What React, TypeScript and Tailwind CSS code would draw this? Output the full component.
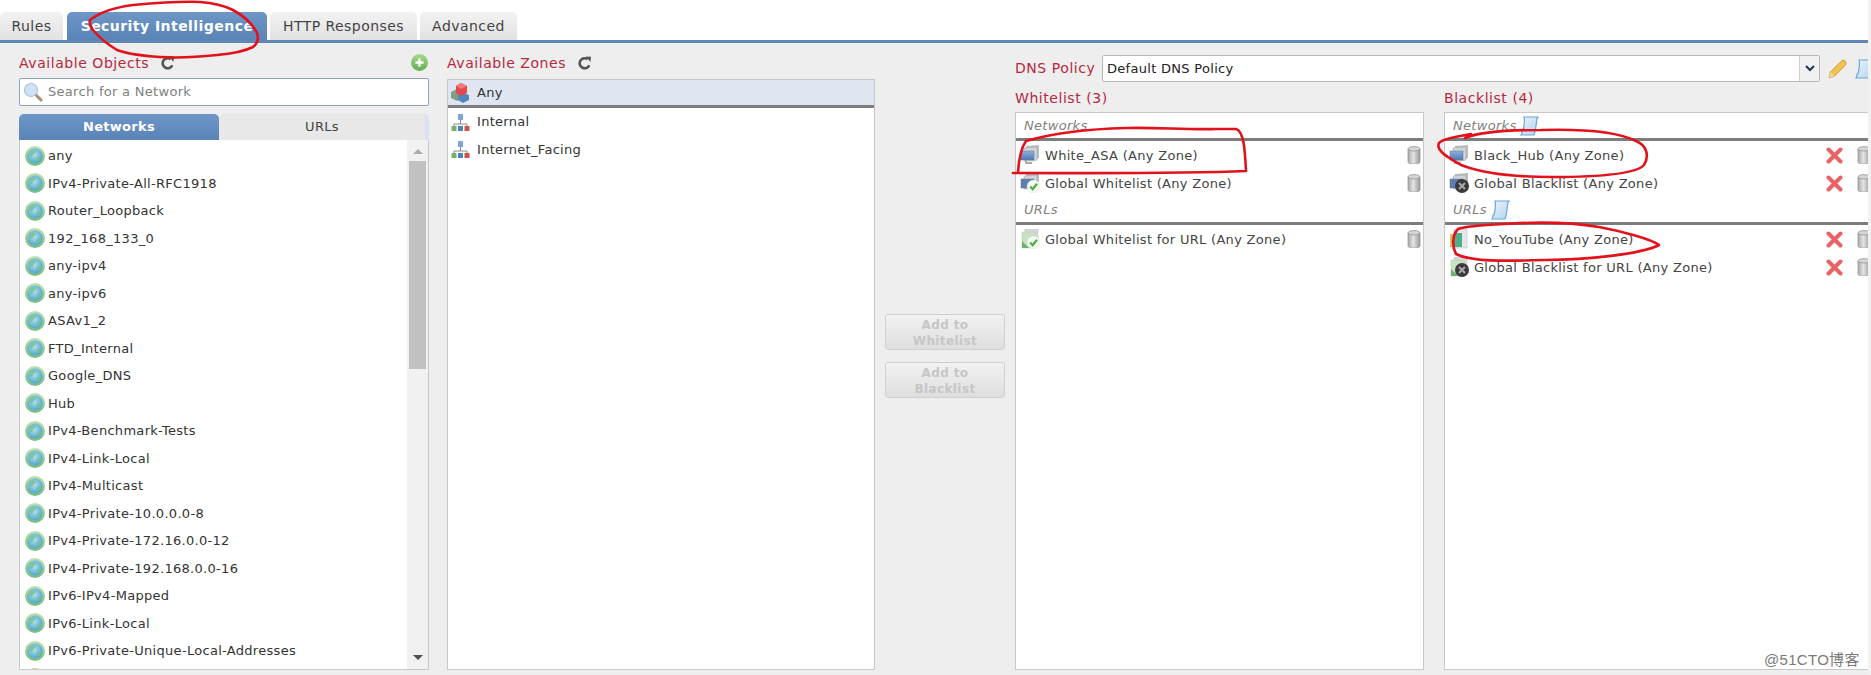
const networks = [
  "any",
  "IPv4-Private-All-RFC1918",
  "Router_Loopback",
  "192_168_133_0",
  "any-ipv4",
  "any-ipv6",
  "ASAv1_2",
  "FTD_Internal",
  "Google_DNS",
  "Hub",
  "IPv4-Benchmark-Tests",
  "IPv4-Link-Local",
  "IPv4-Multicast",
  "IPv4-Private-10.0.0.0-8",
  "IPv4-Private-172.16.0.0-12",
  "IPv4-Private-192.168.0.0-16",
  "IPv6-IPv4-Mapped",
  "IPv6-Link-Local",
  "IPv6-Private-Unique-Local-Addresses",
];

const Defs = () => (
  <svg className="absolute w-0 h-0">
    <defs>
      <radialGradient id="globeBlue" cx="0.45" cy="0.4" r="0.7">
        <stop offset="0" stopColor="#b4e2f0" />
        <stop offset="0.7" stopColor="#5fb0d4" />
        <stop offset="1" stopColor="#4a9cc0" />
      </radialGradient>
      <linearGradient id="globeRing" x1="0" y1="0" x2="0" y2="1">
        <stop offset="0" stopColor="#bfe0b2" />
        <stop offset="1" stopColor="#74bb7c" />
      </linearGradient>
      <linearGradient id="plusGreen" x1="0" y1="0" x2="0" y2="1">
        <stop offset="0" stopColor="#a8da8e" />
        <stop offset="1" stopColor="#62ad55" />
      </linearGradient>
      <linearGradient id="screenBlue" x1="0" y1="0" x2="0" y2="1">
        <stop offset="0" stopColor="#8fb0dc" />
        <stop offset="1" stopColor="#4f78b4" />
      </linearGradient>
      <linearGradient id="trashGray" x1="0" y1="0" x2="1" y2="0">
        <stop offset="0" stopColor="#a9a9a9" />
        <stop offset="0.45" stopColor="#e4e4e4" />
        <stop offset="1" stopColor="#9a9a9a" />
      </linearGradient>
      <linearGradient id="scrollBlue" x1="0" y1="0" x2="1" y2="1">
        <stop offset="0" stopColor="#eaf3fb" />
        <stop offset="1" stopColor="#b5d3ee" />
      </linearGradient>
    </defs>
  </svg>
);

const GlobeIcon = () => (
  <svg width="20" height="20" viewBox="0 0 20 20" className="shrink-0">
    <circle cx="10" cy="10" r="10" fill="url(#globeRing)" />
    <circle cx="10" cy="10" r="7.6" fill="url(#globeBlue)" />
    <path d="M5 6c2-2 5-2 6-1s-1 2-2 3-1 3-3 3-2-3-1-5zM12 11c2-1 4 0 4 1s-2 3-3 3-2-3-1-4z" fill="#7cc08e" opacity="0.8" />
  </svg>
);

const ZoneAnyIcon = () => (
  <svg width="20" height="20" viewBox="0 0 20 20" className="shrink-0">
    <path d="M1 9l6-3 5 3v6l-5 3-6-3z" fill="#7f9f86" />
    <path d="M8 12l5-2 6 2v5l-6 3-5-3z" fill="#4f86bb" />
    <path d="M6 3l5-3 6 3v7l-6 3-5-3z" fill="#e2474b" />
    <path d="M6 3l5-3 6 3-6 3z" fill="#f07a78" />
  </svg>
);

const ZoneTreeIcon = () => (
  <svg width="19" height="19" viewBox="0 0 19 19" className="shrink-0">
    <rect x="7" y="1" width="5" height="6" fill="#7ea7d8" />
    <path d="M9.500 7v4M3 13v-2h13v2" stroke="#8a8a8a" strokeWidth="1" fill="none" />
    <rect x="0.5" y="13" width="5" height="5" fill="#6fb36f" />
    <rect x="7" y="13" width="5" height="5" fill="#4f82b8" />
    <rect x="13.5" y="13" width="5" height="5" fill="#c9534f" />
  </svg>
);

const StackIcon = ({ tone = "light" }: { tone?: "light" | "flat" }) => (
  <>
    <path d="M6 1l13-1v13l-4 2H6z" fill="#b9bdc2" />
    <path d="M4 3l13-1v13l-4 1H4z" fill="#d2d5d8" stroke="#9aa0a6" strokeWidth="0.5" />
    <rect x="1" y="6" width="13" height="9" fill={tone === "flat" ? "#5c7fb0" : "url(#screenBlue)"} stroke="#64748b" strokeWidth="0.5" />
  </>
);

const NetworkIcon = () => (
  <svg width="20" height="20" viewBox="0 0 20 20" className="shrink-0">
    <StackIcon />
    <path d="M6 15v3h6" stroke="#a8b0a8" strokeWidth="2" fill="none" />
  </svg>
);

const Check = () => (
  <>
    <circle cx="13.5" cy="13.5" r="6.5" fill="#f4fbf2" stroke="#cfe3c9" strokeWidth="0.5" />
    <path d="M10.200 13.500l2.500 2.700 4.300-5.400" stroke="#58a84e" strokeWidth="2.200" fill="none" />
  </>
);

const Cross = () => (
  <>
    <circle cx="13" cy="13" r="7" fill="#3a3a3a" />
    <path d="M10 10l6 6M16 10l-6 6" stroke="#a9a9a9" strokeWidth="2" />
  </>
);

const GlobalNetIcon = ({ block }: { block?: boolean }) => (
  <svg width="20" height="20" viewBox="0 0 20 20" className="shrink-0">
    <StackIcon tone="flat" />
    {block ? <Cross /> : <Check />}
  </svg>
);

const UrlStack = () => (
  <>
    <path d="M5 0h13v15H5z" fill="#d6d8da" stroke="#b5b8bb" strokeWidth="0.5" />
    <path d="M2 3h13v16H2z" fill="#c8e2c4" stroke="#b5c9b2" strokeWidth="0.5" />
    <path d="M2 12l7 7H2z" fill="#6cb36a" />
  </>
);

const GlobalUrlIcon = ({ block }: { block?: boolean }) => (
  <svg width="20" height="20" viewBox="0 0 20 20" className="shrink-0">
    <UrlStack />
    {block ? <Cross /> : <Check />}
  </svg>
);

const UrlIcon = () => (
  <svg width="20" height="20" viewBox="0 0 20 20" className="shrink-0">
    <path d="M5 0h13v19H5z" fill="#e4e6e8" stroke="#b5b8bb" strokeWidth="0.5" />
    <path d="M1 5h11v13H1z" fill="#d9a642" opacity="0.8" />
    <path d="M5 4h8v14H5z" fill="#4eb08a" />
  </svg>
);

const TrashIcon = () => (
  <svg width="14" height="18" viewBox="0 0 14 18" className="shrink-0">
    <path d="M1 3v13c0 1 2 2 6 2s6-1 6-2V3z" fill="url(#trashGray)" stroke="#8f8f8f" strokeWidth="0.7" />
    <ellipse cx="7" cy="2.8" rx="6" ry="2.2" fill="#d5d5d5" stroke="#8f8f8f" strokeWidth="0.7" />
  </svg>
);

const RedX = () => (
  <svg width="17" height="17" viewBox="0 0 17 17" className="shrink-0">
    <path d="M2.500 2.500l12 12M14.500 2.500l-12 12" stroke="#ea6265" strokeWidth="4" strokeLinecap="round" />
  </svg>
);

const ScrollIcon = () => (
  <svg width="19" height="20" viewBox="0 0 19 20" className="shrink-0">
    <path d="M4 1h14c-2 2-1 3-2 9s-1 7-2 9H1c1-1 1-3 1-4h1C4 11 5 5 4 1z" fill="url(#scrollBlue)" stroke="#6fa5d8" strokeWidth="1.200" />
  </svg>
);

const RefreshIcon = () => (
  <svg width="14" height="14" viewBox="0 0 14 14" className="shrink-0">
    <path d="M11.300 9.200A5 5 0 1 1 9.600 3.200" stroke="#555" strokeWidth="2.600" fill="none" />
    <path d="M7.800 0.500L13 0.800 12.400 6z" fill="#555" />
  </svg>
);

const SearchIcon = () => (
  <svg width="20" height="20" viewBox="0 0 20 20" className="shrink-0">
    <path d="M12 12l6 6" stroke="#b08a6a" strokeWidth="3" strokeLinecap="round" />
    <circle cx="8" cy="8" r="6.500" fill="#cfe2f5" stroke="#a9c3dd" strokeWidth="1.200" />
  </svg>
);

const PlusIcon = () => (
  <svg width="17" height="17" viewBox="0 0 17 17" className="shrink-0">
    <circle cx="8.500" cy="8.500" r="8.500" fill="url(#plusGreen)" />
    <path d="M8.500 4.500v8M4.500 8.500h8" stroke="#fff" strokeWidth="2.400" />
  </svg>
);

const PencilIcon = () => (
  <svg width="20" height="20" viewBox="0 0 20 20" className="shrink-0">
    <path d="M1 19l1.500-6L13 2.500c1.500-1.500 3-1.500 4.200-.2s1.300 2.800-.2 4.300L6.500 17z" fill="#f0c24e" stroke="#d59a2b" strokeWidth="1" />
    <path d="M1 19l1.500-6 4 4z" fill="#e9d9a8" />
  </svg>
);

const Heading = ({ children }: { children: React.ReactNode }) => (
  <span className="text-[14px] tracking-[0.55px] leading-none text-[#b5283f]">{children}</span>
);

const NetworkRow = ({ name }: { name: string }) => (
  <div className="flex items-center h-[27.5px] pl-[5px] gap-[3px] text-[#333]">
    <GlobeIcon />
    <span>{name}</span>
  </div>
);

const SectionLabel = ({ text, scroll }: { text: string; scroll?: boolean }) => (
  <div className="flex items-center h-[28px] pl-[8px] gap-1 border-b-[3px] border-[#7d7d7d] italic text-[#808080]">
    <span className="pt-[1px]">{text}</span>
    {scroll && <ScrollIcon />}
  </div>
);

const ListEntry = ({ icon, label, remove }: { icon: React.ReactNode; label: string; remove?: boolean }) => (
  <div className="flex items-center h-[28px] pl-[4px] pr-[2px] gap-[5px] text-[#444]">
    {icon}
    <span className="flex-1 pt-[1px]">{label}</span>
    {remove && <span className="mr-[9px] flex"><RedX /></span>}
    <TrashIcon />
  </div>
);

const DisabledButton = ({ lines }: { lines: string[] }) => (
  <div className="w-[120px] h-[36px] pt-[1px] flex flex-col items-center justify-center rounded-[3px] border border-[#cfcfcf] bg-gradient-to-b from-[#f2f2f2] to-[#dedede] text-[12px] leading-[16px] tracking-[0.4px] font-bold text-[#c6c6c6]">
    {lines.map((l) => (
      <span key={l}>{l}</span>
    ))}
  </div>
);

export default function App() {
  return (
    <div className="relative w-[1871px] h-[675px] overflow-hidden bg-[#f1f1f1] [font-family:'DejaVu_Sans',sans-serif] text-[13px] tracking-[0.3px]">
      <Defs />
      <div className="w-[1868px] h-[675px] overflow-hidden bg-[#eeeeee] flex flex-col">
        {/* tabs */}
        <div className="bg-white pt-3 flex text-[14px] tracking-[0.45px]">
          <div className="w-[63px] h-[28px] rounded-t-[5px] bg-gradient-to-b from-[#f2f2f2] to-[#e2e2e2] text-[#444] flex items-center justify-center">Rules</div>
          <div className="ml-[4px] w-[200px] h-[28px] rounded-t-[5px] bg-gradient-to-b from-[#6e97c8] to-[#5a83b6] text-white font-bold flex items-center justify-center">Security Intelligence</div>
          <div className="ml-[3px] w-[147px] h-[28px] rounded-t-[5px] bg-gradient-to-b from-[#f2f2f2] to-[#e2e2e2] text-[#444] flex items-center justify-center">HTTP Responses</div>
          <div className="ml-[3px] w-[97px] h-[28px] rounded-t-[5px] bg-gradient-to-b from-[#f2f2f2] to-[#e2e2e2] text-[#444] flex items-center justify-center">Advanced</div>
        </div>
        <div className="h-[3px] bg-[#6088b6]" />

        {/* body */}
        <div className="flex pl-[19px] h-[627px]">
          {/* available objects */}
          <div className="w-[410px] shrink-0 flex flex-col">
            <div className="flex items-center h-[35px] pt-[4px] gap-[12px]">
              <Heading>Available Objects</Heading>
              <RefreshIcon />
              <span className="ml-auto mr-[1px] flex"><PlusIcon /></span>
            </div>
            <div className="h-[28px] flex items-center gap-[5px] pl-[3px] rounded-[2px] border border-[#89a3bf] bg-white text-[#808080]">
              <SearchIcon />
              <span>Search for a Network</span>
            </div>
            <div className="mt-[8px] flex h-[26px]">
              <div className="w-[200px] rounded-t-[5px] bg-gradient-to-b from-[#6e97c8] to-[#5a83b6] text-white font-bold flex items-center justify-center">Networks</div>
              <div className="flex-1 rounded-t-[5px] bg-[#e8e8e8] border-r-[4px] border-[#d8e2f0] text-[#444] flex items-center justify-center">URLs</div>
            </div>
            <div className="flex-1 min-h-0 flex overflow-hidden bg-white border border-t-0 border-[#c8c8c8]">
              <div className="flex-1 overflow-hidden pt-[2px]">
                {networks.map((n) => (
                  <NetworkRow key={n} name={n} />
                ))}
                <NetworkRow name="" />
              </div>
              <div className="w-[21px] shrink-0 flex flex-col items-center bg-[#f1f1f1]">
                <span className="mt-[9px] w-0 h-0 border-x-[5px] border-x-transparent border-b-[5px] border-b-[#aaaaaa]" />
                <div className="mt-[7px] w-[17px] h-[208px] bg-[#c1c1c1]" />
                <span className="mt-auto mb-[9px] w-0 h-0 border-x-[5px] border-x-transparent border-t-[5px] border-t-[#505050]" />
              </div>
            </div>
          </div>

          {/* available zones */}
          <div className="ml-[18px] w-[428px] shrink-0 flex flex-col">
            <div className="flex items-center h-[36px] pt-[4px] gap-[12px]">
              <Heading>Available Zones</Heading>
              <RefreshIcon />
            </div>
            <div className="flex-1 bg-white border border-[#c8c8c8]">
              <div className="flex items-center h-[28px] pl-[2px] gap-[7px] pt-[1px] bg-[#dfe6f2] border-b-[3px] border-[#7d7d7d] text-[#333]">
                <ZoneAnyIcon />
                <span>Any</span>
              </div>
              <div className="flex items-center h-[28px] pl-[3px] gap-[7px] text-[#333]">
                <ZoneTreeIcon />
                <span>Internal</span>
              </div>
              <div className="flex items-center h-[27px] pl-[3px] gap-[7px] text-[#333]">
                <ZoneTreeIcon />
                <span>Internet_Facing</span>
              </div>
            </div>
          </div>

          {/* add buttons */}
          <div className="w-[140px] shrink-0 flex flex-col items-center pt-[271px] gap-[12px]">
            <DisabledButton lines={["Add to", "Whitelist"]} />
            <DisabledButton lines={["Add to", "Blacklist"]} />
          </div>

          {/* dns policy and lists */}
          <div className="w-[862px] shrink-0 flex flex-col">
            <div className="flex items-center mt-[12px] h-[27px]">
              <span className="w-[87px]"><Heading>DNS Policy</Heading></span>
              <div className="w-[718px] h-[27px] flex items-center rounded-[2px] border border-[#b8b8b8] bg-white text-[#222]">
                <span className="flex-1 pl-[4px]">Default DNS Policy</span>
                <div className="w-[20px] h-full flex items-center justify-center border-l border-[#cfcfcf] bg-[#f0f0f0]">
                  <svg width="10" height="7" viewBox="0 0 10 7"><path d="M1 1l4 4 4-4" stroke="#1f3556" strokeWidth="2" fill="none" /></svg>
                </div>
              </div>
              <span className="ml-[8px] flex"><PencilIcon /></span>
              <span className="ml-[7px] flex"><ScrollIcon /></span>
            </div>
            <div className="flex-1 min-h-0 flex mt-[4px] gap-[20px]">
              <div className="w-[409px] shrink-0 flex flex-col">
                <div className="h-[23px] flex items-center"><Heading>Whitelist (3)</Heading></div>
                <div className="mt-[3px] flex-1 bg-white border border-[#c8c8c8]">
                  <SectionLabel text="Networks" />
                  <ListEntry icon={<NetworkIcon />} label="White_ASA (Any Zone)" />
                  <ListEntry icon={<GlobalNetIcon />} label="Global Whitelist (Any Zone)" />
                  <SectionLabel text="URLs" />
                  <ListEntry icon={<GlobalUrlIcon />} label="Global Whitelist for URL (Any Zone)" />
                </div>
              </div>
              <div className="w-[430px] shrink-0 flex flex-col">
                <div className="h-[23px] flex items-center"><Heading>Blacklist (4)</Heading></div>
                <div className="mt-[3px] flex-1 bg-white border border-[#c8c8c8]">
                  <SectionLabel text="Networks" scroll />
                  <ListEntry icon={<NetworkIcon />} label="Black_Hub (Any Zone)" remove />
                  <ListEntry icon={<GlobalNetIcon block />} label="Global Blacklist (Any Zone)" remove />
                  <SectionLabel text="URLs" scroll />
                  <ListEntry icon={<UrlIcon />} label="No_YouTube (Any Zone)" remove />
                  <ListEntry icon={<GlobalUrlIcon block />} label="Global Blacklist for URL (Any Zone)" remove />
                </div>
              </div>
            </div>
          </div>
        </div>
      </div>

      {/* hand drawn red annotations on top of the screenshot */}
      <svg className="absolute inset-0 pointer-events-none" width="1871" height="675" viewBox="0 0 1871 675" fill="none" stroke="#e2121c" strokeWidth="2.6" strokeLinecap="round" strokeLinejoin="round">
        <path d="M90 20C100 12 118 7 133 5 155 3 180 1 200 2c14 1 25 4 33 8 11 6 20 15 24 23 2 6 0 11-4 14-10 5-24 7-36 8-18 2-40 3-57 2-16-1-32-3-43-7-10-6-19-14-24-20-3-4-4-7-3-10" />
        <path d="M1018 172c1-14 3-24 8-31 28-8 60-12 100-13 30-1 60 2 90 1 8 0 14 0 20 0 8 2 9 22 10 42-70 3-160 2-233 2" />
        <path d="M1471 134c-10 2-28 4-32 9-4 8 12 16 22 22 26 10 60 12 90 12 40 0 84-2 93-12 6-10 2-20-8-24-20-10-60-12-95-11-30 0-60 1-76 8" />
        <path d="M1458 229c-6 6-6 18-2 25 16 8 50 7 90 6 40 0 96-6 113-15-8-6-38-14-60-18-30-5-66-5-95-3-20 1-38 2-46 5" />
      </svg>

      {/* watermark */}
      <span className="absolute left-[1764px] top-[650px] text-[15px] leading-[20px] tracking-[0.3px] text-[#7a7a7a] [font-family:'Liberation_Sans','Noto_Sans_CJK_SC',sans-serif]">@51CTO博客</span>
    </div>
  );
}
